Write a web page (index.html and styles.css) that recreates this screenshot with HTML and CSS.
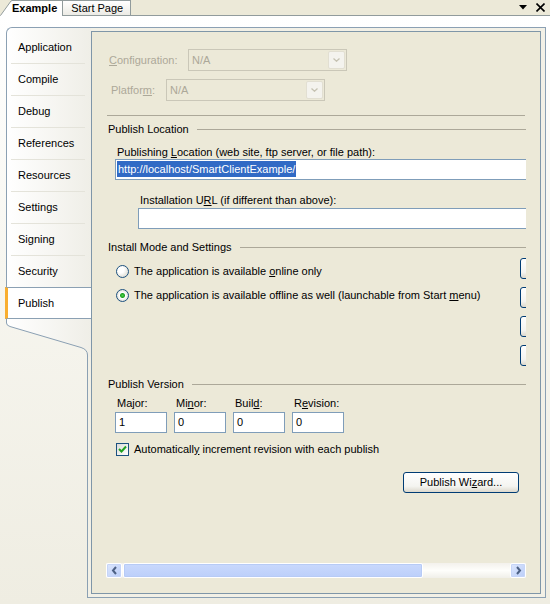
FILE: index.html
```html
<!DOCTYPE html>
<html lang="en">
<head>
    <meta charset="UTF-8">
    <title>Example - Publish</title>
    <link rel="stylesheet" href="styles.css">
</head>
<body>
    <div class="doc-tabs">
        <div class="doc-tab doc-tab-active">
            <svg class="tab-slant" width="12" height="16" viewBox="0 0 12 16">
                <polygon points="0,16 11,1 12,1 12,16" fill="#fff"/>
                <path d="M0.5 15.5 L11 1 L12 0.5" fill="none" stroke="#919b9c"/>
            </svg>
            <span class="tab-label">Example</span>
        </div>
        <div class="doc-tab">Start Page</div>
        <div class="tab-tools">
            <svg width="8" height="5" viewBox="0 0 8 5"><polygon points="0,0 8,0 4,4.5" fill="#000"/></svg>
            <svg width="9" height="9" viewBox="0 0 9 9"><path d="M0.5 0.5 L8.5 8.5 M8.5 0.5 L0.5 8.5" stroke="#000" stroke-width="1.6"/></svg>
        </div>
    </div>

    <div class="frame">
        <div class="side">
            <ul class="nav">
                <li>Application</li>
                <li>Compile</li>
                <li>Debug</li>
                <li>References</li>
                <li>Resources</li>
                <li>Settings</li>
                <li>Signing</li>
                <li>Security</li>
                <li class="active">Publish</li>
            </ul>
            <svg class="nav-tail" width="85" height="38" viewBox="0 0 85 38">
                <defs>
                    <linearGradient id="tailFill" x1="0" x2="1" y1="0" y2="0">
                        <stop offset="0" stop-color="#ffffff"/>
                        <stop offset="1" stop-color="#efeee7"/>
                    </linearGradient>
                </defs>
                <path d="M0 0 H85 V38 H81.5 V36 Q81.5 30.5 75 28.5 L4 7.5 Q0.5 6.5 0.5 4 Z" fill="url(#tailFill)"/>
                <path d="M0.5 0 V4 Q0.5 6.5 4 7.5 L75 28.5 Q81.5 30.5 81.5 36 V38" fill="none" stroke="#8ba0b3"/>
            </svg>
            <div class="side-stem"></div>
        </div>

        <div class="main">
            <div class="panel">
                <div class="view">
                    <div class="field-row config-row">
                        <label class="disabled"><u>C</u>onfiguration:</label>
                        <div class="combo"><span>N/A</span><span class="combo-btn"><svg width="7" height="4" viewBox="0 0 7 4"><path d="M0.5 0.5 L3.5 3.2 L6.5 0.5" fill="none" stroke="#c5c2b2" stroke-width="1.3"/></svg></span></div>
                    </div>
                    <div class="field-row platform-row">
                        <label class="disabled">Platfor<u>m</u>:</label>
                        <div class="combo"><span>N/A</span><span class="combo-btn"><svg width="7" height="4" viewBox="0 0 7 4"><path d="M0.5 0.5 L3.5 3.2 L6.5 0.5" fill="none" stroke="#c5c2b2" stroke-width="1.3"/></svg></span></div>
                    </div>
                    <div class="rule"></div>

                    <div class="group-head head-location"><span>Publish Location</span></div>
                    <div class="caption caption-location">Publishing <u>L</u>ocation (web site, ftp server, or file path):</div>
                    <div class="textbox textbox-location"><span class="selected">http://localhost/SmartClientExample/</span></div>
                    <div class="caption caption-url">Installation U<u>R</u>L (if different than above):</div>
                    <div class="textbox textbox-url"></div>

                    <div class="group-head head-mode"><span>Install Mode and Settings</span></div>
                    <div class="mode-body">
                        <div class="radios">
                            <div class="option"><span class="radio"></span><span>The application is available <u>o</u>nline only</span></div>
                            <div class="option"><span class="radio checked"></span><span>The application is available offline as well (launchable from Start <u>m</u>enu)</span></div>
                        </div>
                        <div class="side-buttons">
                            <div class="button"></div>
                            <div class="button"></div>
                            <div class="button"></div>
                            <div class="button"></div>
                        </div>
                    </div>

                    <div class="group-head head-version"><span>Publish Version</span></div>
                    <div class="version-grid">
                        <label>Ma<u>j</u>or:</label>
                        <label>Mi<u>n</u>or:</label>
                        <label>Buil<u>d</u>:</label>
                        <label>R<u>e</u>vision:</label>
                        <div class="textbox">1</div>
                        <div class="textbox">0</div>
                        <div class="textbox">0</div>
                        <div class="textbox">0</div>
                    </div>
                    <div class="option check-row">
                        <span class="checkbox"><svg width="9" height="9" viewBox="0 0 9 9"><path d="M1 4 L3.5 6.5 L8 1.5" fill="none" stroke="#21a121" stroke-width="2"/></svg></span>
                        <span>Automaticall<u>y</u> increment revision with each publish</span>
                    </div>
                    <div class="button wizard-button">Publish Wi<u>z</u>ard...</div>
                </div>

                <div class="hscroll">
                    <div class="scroll-btn"><svg width="7" height="9" viewBox="0 0 7 9"><path d="M5 1 L2 4.5 L5 8" fill="none" stroke="#4d6185" stroke-width="2"/></svg></div>
                    <div class="scroll-thumb"></div>
                    <div class="scroll-track"></div>
                    <div class="scroll-btn"><svg width="7" height="9" viewBox="0 0 7 9"><path d="M2 1 L5 4.5 L2 8" fill="none" stroke="#4d6185" stroke-width="2"/></svg></div>
                </div>
            </div>
        </div>
    </div>
</body>
</html>
```
FILE: styles.css
```css
body {
    margin: 0;
    width: 550px;
    height: 604px;
    overflow: hidden;
    font-family: "Liberation Sans", Arial, sans-serif;
    font-size: 11px;
    color: #000;
    background: linear-gradient(#ffffff 16px, #f6f5ee 300px, #efede2);
}
u {
    text-decoration: underline;
    text-underline-offset: 1px;
}

/* document tab strip */
.doc-tabs {
    display: flex;
    align-items: flex-end;
    height: 15px;
    border-bottom: 1px solid #919b9c;
    background: #ece9d8;
}
.doc-tab {
    height: 14px;
    line-height: 14px;
    padding: 0 7px 0 8px;
    border-top: 1px solid #919b9c;
    border-right: 1px solid #919b9c;
    background: linear-gradient(#ffffff, #ecebe5);
}
.doc-tab-active {
    display: flex;
    height: 16px;
    margin-bottom: -1px;
    padding: 0;
    border: none;
    background: none;
    font-weight: bold;
}
.tab-slant {
    display: block;
}
.tab-label {
    height: 15px;
    line-height: 15px;
    padding-right: 5px;
    border-top: 1px solid #919b9c;
    border-right: 1px solid #919b9c;
    background: #fff;
}
.tab-tools {
    display: flex;
    align-items: center;
    gap: 9px;
    height: 15px;
    margin-left: auto;
    padding-right: 5px;
}
.tab-tools svg {
    display: block;
}

/* outer frame */
.frame {
    display: flex;
    width: 540px;
    height: 571px;
    margin: 11px 0 0 6px;
}
.side {
    display: flex;
    flex-direction: column;
    width: 85px;
}
.nav {
    list-style: none;
    margin: 0;
    padding: 4px 0 0 0;
    border-top: 1px solid #8ba0b3;
    border-left: 1px solid #8ba0b3;
    border-top-left-radius: 6px;
    background: linear-gradient(to right, #ffffff, #efeee7);
}
.nav li {
    height: 31px;
    line-height: 31px;
    margin: 0 6px 0 4px;
    padding-left: 7px;
    border-bottom: 1px solid #e4e3da;
}
.nav li.active {
    height: 30px;
    line-height: 30px;
    margin: -1px 0 0 -2px;
    padding-left: 10px;
    border-left: 3px solid #f9ae2f;
    border-top: 1px solid #8ba0b3;
    border-bottom: 1px solid #8ba0b3;
    background: #fff;
}
.nav-tail {
    display: block;
    flex-shrink: 0;
}
.side-stem {
    flex: 1;
    margin-left: 81px;
    border-left: 1px solid #8ba0b3;
    border-bottom: 1px solid #8ba0b3;
    background: #f2f0e6;
}
.main {
    flex: 1;
    display: flex;
    padding: 3px 4px 3px 0;
    border-top: 1px solid #8ba0b3;
    border-right: 1px solid #8ba0b3;
    border-bottom: 1px solid #8ba0b3;
    background: #f2f0e6;
}
.panel {
    flex: 1;
    display: flex;
    flex-direction: column;
    padding: 0 0 15px 14px;
    border: 1px solid #7f96a8;
    background: #ece9d8;
}
.view {
    flex: 1;
    width: 420px;
    overflow: hidden;
}

/* disabled combos */
.field-row {
    display: flex;
    align-items: center;
    height: 22px;
}
.field-row label {
    flex-shrink: 0;
}
.disabled {
    color: #aca899;
}
.config-row {
    margin-top: 17px;
    padding-left: 3px;
}
.config-row label {
    width: 79px;
}
.platform-row {
    margin-top: 8px;
    padding-left: 5px;
}
.platform-row label {
    width: 55px;
}
.combo {
    display: flex;
    align-items: center;
    justify-content: space-between;
    box-sizing: border-box;
    width: 159px;
    height: 22px;
    padding: 1px 1px 1px 3px;
    border: 1px solid #cac7b8;
    color: #aca899;
}
.combo-btn {
    display: flex;
    align-items: center;
    justify-content: center;
    box-sizing: border-box;
    width: 17px;
    height: 18px;
    border: 1px solid #e2dfd2;
    border-radius: 2px;
    background: #f4f3ee;
}
.rule {
    width: 418px;
    height: 1px;
    margin: 14px 0 0 1px;
    background: #aca899;
}

/* group headers */
.group-head {
    display: flex;
    align-items: center;
    height: 14px;
    padding-left: 2px;
    white-space: nowrap;
}
.group-head::after {
    content: "";
    flex: 1;
    height: 1px;
    margin-left: 8px;
    background: #aca899;
}
.head-location {
    margin-top: 6px;
}
.head-mode {
    margin-top: 11px;
}
.head-version {
    margin-top: 11px;
}

/* text boxes */
.caption {
    height: 14px;
    line-height: 14px;
    white-space: nowrap;
}
.caption-location {
    margin-top: 9px;
    padding-left: 11px;
}
.caption-url {
    margin-top: 13px;
    padding-left: 34px;
}
.textbox {
    box-sizing: border-box;
    height: 21px;
    padding: 1px 3px;
    border: 1px solid #7f9db9;
    background: #fff;
    line-height: 17px;
    white-space: nowrap;
}
.textbox-location {
    width: 440px;
    margin-left: 9px;
    padding-left: 1px;
}
.textbox-url {
    width: 420px;
    margin: 1px 0 0 32px;
}
.selected {
    display: inline-block;
    padding: 0 1px;
    background: #316ac5;
    color: #fff;
    line-height: 16px;
}

/* install mode */
.mode-body {
    display: flex;
    margin-top: 4px;
}
.radios {
    display: flex;
    flex-direction: column;
    gap: 10px;
    flex-shrink: 0;
    width: 404px;
    padding: 6px 0 0 10px;
}
.option {
    display: flex;
    align-items: center;
    gap: 5px;
    height: 14px;
    white-space: nowrap;
}
.radio {
    flex-shrink: 0;
    box-sizing: border-box;
    width: 13px;
    height: 13px;
    border: 1px solid #1c5180;
    border-radius: 50%;
    background: radial-gradient(circle at 35% 35%, #ffffff 30%, #e4e3dc 70%, #d3d1c6);
}
.radio.checked {
    background: radial-gradient(circle, #4ed44e 0, #21a121 2px, #ffffff 3px, #ffffff 30%, #e4e3dc 70%, #d3d1c6);
}
.side-buttons {
    display: flex;
    flex-direction: column;
    gap: 8px;
    flex-shrink: 0;
    width: 110px;
}
.button {
    box-sizing: border-box;
    height: 21px;
    line-height: 19px;
    border: 1px solid #003c74;
    border-radius: 3px;
    background: linear-gradient(#ffffff, #f4f4f0 70%, #dcd8cc);
    text-align: center;
    white-space: nowrap;
}

/* version */
.version-grid {
    display: grid;
    grid-template-columns: repeat(4, 52px);
    column-gap: 7px;
    row-gap: 2px;
    margin: 5px 0 0 9px;
}
.version-grid label {
    height: 14px;
    line-height: 14px;
    padding-left: 2px;
}
.version-grid .textbox {
    padding-left: 3px;
}
.check-row {
    margin: 9px 0 0 10px;
}
.checkbox {
    display: flex;
    align-items: center;
    justify-content: center;
    flex-shrink: 0;
    box-sizing: border-box;
    width: 13px;
    height: 13px;
    border: 1px solid #1c5180;
    background: linear-gradient(135deg, #dcdcd7, #ffffff);
}
.wizard-button {
    width: 116px;
    margin: 16px 0 0 297px;
}

/* horizontal scroll bar */
.hscroll {
    display: flex;
    width: 420px;
    height: 15px;
    background: linear-gradient(#f3f1ec, #fefefb 50%, #f0efe9);
}
.scroll-btn {
    display: flex;
    align-items: center;
    justify-content: center;
    box-sizing: border-box;
    width: 16px;
    height: 15px;
    border: 1px solid #ffffff;
    border-radius: 2px;
    background: linear-gradient(135deg, #dde7fd, #bacdf8);
    box-shadow: inset 0 0 0 1px #c6d5f8;
}
.scroll-thumb {
    box-sizing: border-box;
    width: 300px;
    margin-left: 1px;
    border: 1px solid #ffffff;
    border-radius: 2px;
    background: linear-gradient(#c9d9fd, #bccffa);
    box-shadow: inset 0 0 0 1px #b7cbf6;
}
.scroll-track {
    flex: 1;
}
```
